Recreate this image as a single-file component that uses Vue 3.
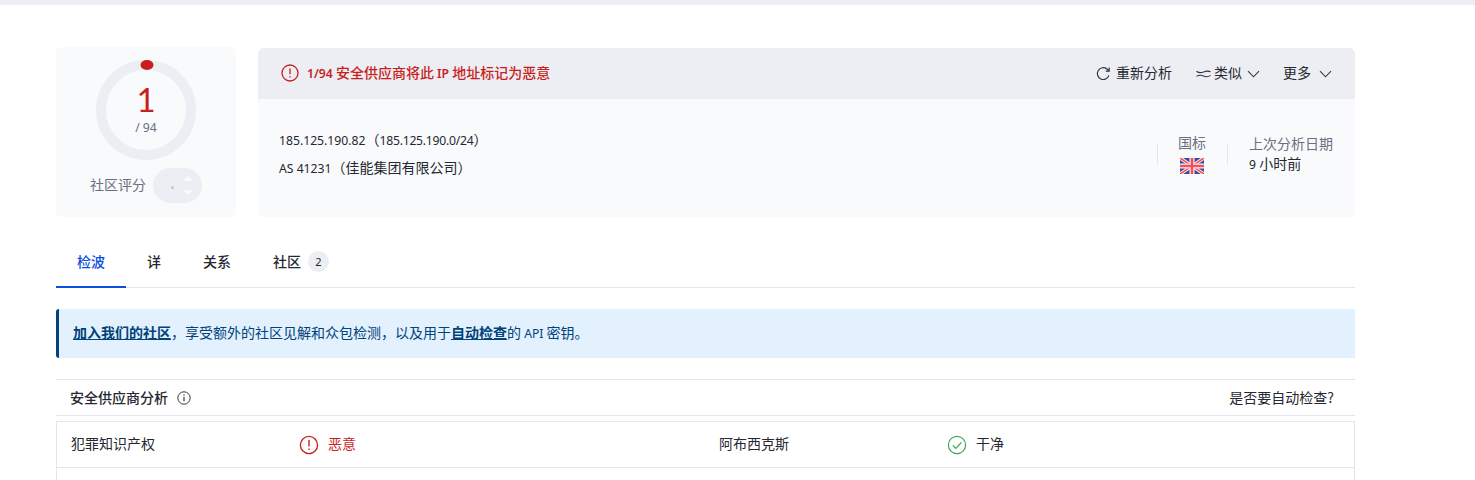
<script setup>
const tabs = [
  { label: '检波', active: true },
  { label: '详' },
  { label: '关系' },
  { label: '社区', badge: 2 }
]
</script>

<template>
  <div class="page">
    <div class="topbar"></div>
    <main class="main">
      <section class="summary">
        <div class="score-card">
          <div class="gauge">
            <svg class="ring" width="100" height="100" viewBox="0 0 100 100">
              <circle cx="50" cy="50" r="45" fill="none" stroke="#eceef3" stroke-width="10" />
              <ellipse cx="51" cy="5" rx="6.5" ry="5" fill="#c81e1e" />
            </svg>
            <div class="gauge-num">1</div>
            <div class="gauge-den">/ 94</div>
          </div>
          <div class="community">
            <span class="community-label">社区评分</span>
            <span class="pill">
              <i class="dot"></i>
              <span class="arrows"><i class="up"></i><i class="down"></i></span>
            </span>
          </div>
        </div>
        <div class="info-card">
          <div class="info-head">
            <div class="alert">
              <svg width="18" height="18" viewBox="0 0 18 18" fill="none">
                <circle cx="9" cy="9" r="8" stroke="#c81e1e" stroke-width="1.3" />
                <path d="M9 4.6v5.6M9 12.2v1.4" stroke="#c81e1e" stroke-width="1.3" />
              </svg>
              <span><span class="l">1/94 </span>安全供应商将此 <span class="l">IP </span>地址标记为恶意</span>
            </div>
            <div class="actions">
              <span class="action first">
                <svg width="15" height="15" viewBox="0 0 15 15" fill="none" stroke="#33363f" stroke-width="1.2">
                  <path d="M12.9 9.4A5.9 5.9 0 1 1 11 3L13 5" />
                  <path d="M13.2 1.6V5.2H9.8" />
                </svg>
                重新分析
              </span>
              <span class="action second">
                <svg width="15" height="10" viewBox="0 0 15 10" fill="none" stroke="#33363f" stroke-width="1.1">
                  <path d="M.5 2.2C3 4.2 5 4 7.5 3S12 1.4 14.5 2.8" />
                  <path d="M.5 7.4C3 5.8 5 5.8 7.5 7s4.5 1.2 7-.6" />
                </svg>
                类似
                <svg class="chev" width="13" height="8" viewBox="0 0 13 8" fill="none" stroke="#33363f" stroke-width="1.1"><path d="M1 1.2l5.5 5.6L12 1.2" /></svg>
              </span>
              <span class="action third">
                更多
                <svg class="chev more-chev" width="13" height="8" viewBox="0 0 13 8" fill="none" stroke="#33363f" stroke-width="1.1"><path d="M1 1.2l5.5 5.6L12 1.2" /></svg>
              </span>
            </div>
          </div>
          <div class="info-body">
            <div class="ip">
              <div class="ip-line"><span class="l">185.125.190.82</span>（<span class="l tight">185.125.190.0/24</span>）</div>
              <div class="as-line"><span class="l">AS 41231</span>（佳能集团有限公司）</div>
            </div>
            <div class="meta">
              <div class="meta-col country">
                <div class="meta-label">国标</div>
                <svg class="flag" width="24" height="16" viewBox="0 0 24 16">
                  <rect width="24" height="16" fill="#41479b" />
                  <path d="M0 0l24 16M24 0L0 16" stroke="#f5f5f5" stroke-width="3.4" />
                  <path d="M0 0l24 16M24 0L0 16" stroke="#ff4b55" stroke-width="1.5" />
                  <path d="M12 0v16M0 8h24" stroke="#f5f5f5" stroke-width="5" />
                  <path d="M12 0v16M0 8h24" stroke="#ff4b55" stroke-width="2.6" />
                </svg>
              </div>
              <div class="meta-col date">
                <div class="meta-label">上次分析日期</div>
                <div class="meta-value"><span class="l">9 </span>小时前</div>
              </div>
            </div>
          </div>
        </div>
      </section>

      <nav class="tabs">
        <div v-for="t in tabs" :key="t.label" class="tab" :class="{ active: t.active }">
          {{ t.label }}
          <span v-if="t.badge" class="badge">{{ t.badge }}</span>
        </div>
      </nav>

      <div class="notice">
        <a class="notice-link">加入我们的社区</a>，享受额外的社区见解和众包检测，以及用于<a class="notice-link">自动检查</a>的 <span class="l">API </span>密钥。
      </div>

      <div class="section-head">
        <div class="section-title">
          <span>安全供应商分析</span>
          <svg width="14" height="14" viewBox="0 0 14 14" fill="none" stroke="#33363f" stroke-width="1">
            <circle cx="7" cy="7" r="6.2" />
            <path d="M7 6v4.2M7 3.6v1.2" stroke-width="1.2" />
          </svg>
        </div>
        <div class="section-right">是否要自动检查?</div>
      </div>

      <div class="vendors">
        <div class="vendor-row">
          <div class="vendor-name">犯罪知识产权</div>
          <div class="verdict bad">
            <svg width="20" height="20" viewBox="0 0 20 20" fill="none">
              <circle cx="10" cy="10" r="8.6" stroke="#c81e1e" stroke-width="1.3" />
              <path d="M10 5v6.4M10 13.4v1.6" stroke="#c81e1e" stroke-width="1.4" />
            </svg>
            恶意
          </div>
          <div class="vendor-name second-name">阿布西克斯</div>
          <div class="verdict good">
            <svg width="20" height="20" viewBox="0 0 20 20" fill="none">
              <circle cx="10" cy="10" r="8.6" stroke="#3fa75a" stroke-width="1.2" />
              <path d="M5.8 10.4l3 3 5.6-6" stroke="#3fa75a" stroke-width="1.3" />
            </svg>
            干净
          </div>
        </div>
        <div class="vendor-row empty"></div>
      </div>
    </main>
  </div>
</template>

<style>
html, body { margin: 0; background: #fff; overflow: hidden; }
</style>

<style scoped>
.page {
  height: 480px;
  overflow: hidden;
  font-family: "Noto Sans CJK SC", "Noto Sans", sans-serif;
  font-size: 14px;
  color: #252830;
  background: #fff;
}
.l { font-family: "Noto Sans", sans-serif; font-size: 12.2px; }
.tight { letter-spacing: -0.25px; }
.topbar { height: 5px; background: #eceef3; }
.main { width: 1299px; margin-left: 56px; padding-top: 42px; }
.summary { display: flex; gap: 22px; height: 170px; }
.score-card {
  width: 180px;
  flex: none;
  background: #f9fafc;
  border-radius: 6px;
  display: flex;
  flex-direction: column;
  align-items: center;
  padding-top: 13px;
  box-sizing: border-box;
}
.gauge { position: relative; width: 100px; height: 100px; }
.ring { display: block; }
.gauge-num {
  position: absolute; left: 0; right: 0; top: 19px;
  text-align: center; font-family: Lato, sans-serif; font-size: 33px; line-height: 40px; color: #c81e1e;
}
.gauge-den {
  position: absolute; left: 0; right: 0; top: 59px;
  text-align: center; font-family: "Noto Sans", sans-serif; font-size: 12.2px; line-height: 18px; color: #6b7080;
}
.community { display: flex; align-items: center; gap: 7px; margin-top: 8px; }
.community-label { color: #6b7080; margin-bottom: 4px; }
.pill {
  width: 49px; height: 35px; border-radius: 18px; background: #eceef3;
  display: flex; align-items: center; justify-content: flex-end; gap: 9px;
  padding-right: 9px; box-sizing: border-box;
}
.dot { width: 3px; height: 3px; border-radius: 50%; background: #bfc6d6; margin-top: 3px; }
.arrows { display: flex; flex-direction: column; gap: 9px; }
.up, .down { display: block; width: 0; height: 0; border-left: 5px solid transparent; border-right: 5px solid transparent; }
.up { border-bottom: 5px solid #f8f9fb; }
.down { border-top: 5px solid #f8f9fb; }
.info-card {
  flex: 1; margin-top: 1px; border-radius: 6px; overflow: hidden; background: #f9fafc;
  display: flex; flex-direction: column;
}
.info-head {
  height: 51px; flex: none; background: #eceef3;
  display: flex; align-items: center; justify-content: space-between;
  padding: 0 23px 4px 23px; box-sizing: border-box;
}
.alert { display: flex; align-items: center; gap: 8px; color: #c81e1e; font-weight: 500; }
.alert svg { margin-top: 2px; }
.alert .l { font-weight: 600; }
.actions { display: flex; align-items: center; }
.action { display: flex; align-items: center; color: #252830; }
.action svg { margin-top: 4px; }
.first { gap: 5px; margin-right: 24px; }
.second { gap: 3px; margin-right: 23px; }
.chev { margin-left: 2px; }
.more-chev { margin-left: 8px; }
.info-body {
  flex: 1; display: flex; justify-content: space-between; align-items: flex-start;
  padding: 0 22px 0 21px;
}
.ip { padding-top: 30px; }
.ip-line { line-height: 20px; }
.as-line { line-height: 20px; margin-top: 6px; }
.meta { display: flex; padding-top: 34px; }
.meta-col { box-sizing: border-box; }
.country {
  width: 71px; height: 21px; border-left: 1px solid #e4e6ec; border-right: 1px solid #e4e6ec;
  margin-top: 11px; position: relative; margin-right: 21px;
}
.country .meta-label { position: absolute; left: 20px; top: -12px; white-space: nowrap; }
.flag { position: absolute; left: 22px; top: 14px; }
.meta-label { color: #6b7080; line-height: 20px; }
.meta-value { line-height: 20px; margin-top: 0; }
.tabs {
  display: flex; height: 70px; border-bottom: 1px solid #e4e6ec;
}
.tab {
  display: flex; align-items: center; justify-content: center; height: 70px;
  padding: 18px 21px 0; box-sizing: border-box; font-weight: 500; color: #252830;
  position: relative;
}
.tab.active { color: #0b4fdc; }
.tab.active::after {
  content: ""; position: absolute; left: 0; right: 0; bottom: -1px; height: 2px; background: #0b4fdc;
}
.badge {
  width: 21px; height: 21px; border-radius: 50%; background: #eceef3;
  font-family: "Noto Sans", sans-serif; font-size: 11px; font-weight: 400;
  display: flex; align-items: center; justify-content: center;
  margin-left: 7px;
}
.notice {
  margin-top: 21px; height: 49px; line-height: 47px; box-sizing: border-box;
  background: #e2f1fd; border-left: 3px solid #00427a; border-radius: 3px 0 0 3px;
  padding-left: 14px; color: #00427a;
}
.notice-link { font-weight: 700; text-decoration: underline; }
.section-head {
  margin-top: 21px; height: 37px; box-sizing: border-box;
  border-top: 1px solid #e4e6ec; border-bottom: 1px solid #e4e6ec;
  display: flex; align-items: center; justify-content: space-between;
  padding: 0 21px 2px 14px;
}
.section-title { display: flex; align-items: center; gap: 9px; font-weight: 500; }
.section-title svg { margin-top: 3px; }
.vendors { margin-top: 5px; border: 1px solid #e4e6ec; border-bottom: 0; }
.vendor-row {
  height: 46px; box-sizing: border-box; display: flex; align-items: center; border-bottom: 1px solid #e4e6ec;
  padding: 0 0 3px 14px;
}
.vendor-row.empty { height: 40px; border-bottom: 0; }
.vendor-name { width: 228px; }
.second-name { width: 228px; }
.verdict { display: flex; align-items: center; gap: 9px; width: 420px; }
.verdict svg { margin-top: 3px; }
.verdict.good { width: auto; }
.bad { color: #c81e1e; }
</style>
